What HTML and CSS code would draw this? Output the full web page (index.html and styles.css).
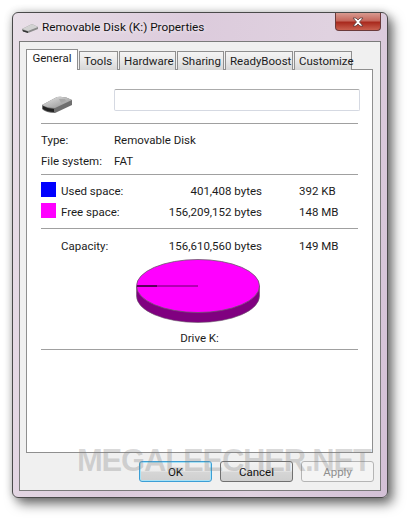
FILE: index.html
```html
<!DOCTYPE html>
<html lang="en">
<head>
    <meta charset="UTF-8">
    <meta name="viewport" content="width=device-width, initial-scale=1.0">
    <title>Removable Disk (K:) Properties</title>
    <link rel="stylesheet" href="styles.css">
</head>
<body>
    <div class="window">
        <div class="title-bar">
            <svg class="title-icon" width="18" height="12" viewBox="0 0 18 12">
                <path d="M1 7 L11 2 L17 5 L17 7 L7 11 L1 9 Z" fill="#8b8b8b"/>
                <path d="M1 7 L11 2 L17 5 L7 9 Z" fill="#d2d2d2"/>
                <path d="M2 8 L7 9.5 L7 11 L2 9.5 Z" fill="#333"/>
            </svg>
            <span class="title-text">Removable Disk (K:) Properties</span>
            <div class="close-button">
                <svg width="14" height="10" viewBox="0 0 14 10">
                    <path d="M2 1 L5 1 L7 3 L9 1 L12 1 L8.5 5 L12 9 L9 9 L7 7 L5 9 L2 9 L5.5 5 Z" fill="#fff" stroke="#5b3a3a" stroke-width="0.8"/>
                </svg>
            </div>
        </div>

        <div class="dialog">
            <div class="tabs">
                <div class="tab tab-active">General</div>
                <div class="tab tab-tools">Tools</div>
                <div class="tab tab-hardware">Hardware</div>
                <div class="tab tab-sharing">Sharing</div>
                <div class="tab tab-boost">ReadyBoost</div>
                <div class="tab tab-customize">Customize</div>
            </div>

            <div class="panel">
                <div class="name-row">
                    <svg class="drive-icon" width="32" height="18" viewBox="0 0 32 18">
                        <defs>
                            <linearGradient id="driveTop" x1="0" y1="0" x2="1" y2="1">
                                <stop offset="0" stop-color="#e6e6e6"/>
                                <stop offset="1" stop-color="#8d8d8d"/>
                            </linearGradient>
                        </defs>
                        <path d="M1 9 L16 1 Q24 0 31 4 L31 9 L14 17 Q5 17 1 13 Z" fill="#6f6f6f"/>
                        <path d="M1 9 L16 1 Q24 0 31 4 L14 12 Q6 12 1 9 Z" fill="url(#driveTop)"/>
                        <path d="M2 10 Q7 13 13 13 L13 16 Q6 16 2 13 Z" fill="#222"/>
                        <path d="M18 3 L24 3 L25 5 L20 7 Z" fill="#a8a8a8"/>
                    </svg>
                    <div class="name-field"></div>
                </div>
                <div class="separator"></div>

                <div class="info-row info-type">
                    <span class="info-label">Type:</span>
                    <span>Removable Disk</span>
                </div>
                <div class="info-row info-fs">
                    <span class="info-label">File system:</span>
                    <span>FAT</span>
                </div>
                <div class="separator"></div>

                <div class="space-row space-used">
                    <span class="swatch swatch-used"></span>
                    <span class="space-label">Used space:</span>
                    <span class="space-bytes">401,408 bytes</span>
                    <span class="space-size">392 KB</span>
                </div>
                <div class="space-row space-free">
                    <span class="swatch swatch-free"></span>
                    <span class="space-label">Free space:</span>
                    <span class="space-bytes">156,209,152 bytes</span>
                    <span class="space-size">148 MB</span>
                </div>
                <div class="separator"></div>

                <div class="space-row space-capacity">
                    <span class="swatch"></span>
                    <span class="space-label">Capacity:</span>
                    <span class="space-bytes">156,610,560 bytes</span>
                    <span class="space-size">149 MB</span>
                </div>

                <svg class="pie" width="126" height="66" viewBox="0 0 126 66">
                    <path d="M1.500 27 L1.500 37 A61.500 26.500 0 0 0 124.500 37 L124.500 27 Z" fill="#800080" stroke="#6a5a6a" stroke-width="0.6"/>
                    <ellipse cx="63" cy="27" rx="61.500" ry="26.500" fill="#ff00ff" stroke="#6a5a6a" stroke-width="0.8"/>
                    <path d="M2 27 L63 27" stroke="#400040" stroke-width="0.8"/>
                    <path d="M2 27 L22 27" stroke="#000" stroke-width="1"/>
                </svg>
                <div class="drive-label">Drive K:</div>
                <div class="separator"></div>
            </div>

            <div class="buttons">
                <div class="button button-default">OK</div>
                <div class="button">Cancel</div>
                <div class="button button-disabled">Apply</div>
            </div>
        </div>

        <div class="watermark">MEGALEECHER.NET</div>
    </div>
</body>
</html>
```

FILE: styles.css
```css
html, body {
    margin: 0;
    height: 100%;
    background-color: #fff;
    font-family: Roboto, sans-serif;
    font-size: 11.5px;
    color: #1c1c1c;
    overflow: hidden;
}

.window {
    position: relative;
    box-sizing: border-box;
    width: 376px;
    height: 486px;
    margin: 12px 0 0 12px;
    padding: 0 6px 6px;
    display: flex;
    flex-direction: column;
    border: 1px solid #4a4a4a;
    border-radius: 6px;
    background: linear-gradient(100deg, #e9dfe8, #dccbdc 40%, #e0d2e0 70%, #d3c0d6);
    box-shadow: 5px 6px 12px rgba(0, 0, 0, 0.55), 0 0 8px rgba(0, 0, 0, 0.2);
}

.title-bar {
    height: 28px;
    display: flex;
    align-items: center;
    flex-shrink: 0;
}

.title-icon {
    margin: 1px 3px 0 2px;
}

.title-text {
    font-size: 11.8px;
    color: #111;
    text-shadow: 0 0 4px #fff;
}

.close-button {
    position: absolute;
    top: 0;
    right: 6px;
    width: 46px;
    height: 18px;
    display: flex;
    align-items: center;
    justify-content: center;
    box-sizing: border-box;
    border: 1px solid #6b3a3a;
    border-top: none;
    border-radius: 0 0 4px 4px;
    background: linear-gradient(#d89a90, #c5675c 45%, #a92a1e 55%, #c9604f);
}

.dialog {
    flex: 1;
    display: flex;
    flex-direction: column;
    padding: 7px 7px 0 6px;
    border: 1px solid #7a7a7a;
    background-color: #f0f0f0;
}

.tabs {
    display: flex;
    height: 20px;
    gap: 1px;
    position: relative;
    z-index: 1;
}

.tab {
    box-sizing: border-box;
    height: 19px;
    margin-top: 2px;
    padding: 2px 0 0 4px;
    border: 1px solid #8f8f8f;
    border-bottom: none;
    background: linear-gradient(#f4f4f4, #eaeaea 45%, #d6d6d6);
}

.tab-active {
    width: 52px;
    height: 21px;
    margin-top: 0;
    padding: 1px 0 0;
    text-align: center;
    background: #fff;
}

.tab-tools { width: 39px; }
.tab-hardware { width: 57px; }
.tab-sharing { width: 47px; }
.tab-boost { width: 68px; }
.tab-customize { width: 58px; }

.panel {
    box-sizing: border-box;
    width: 347px;
    height: 384px;
    padding: 0 14px;
    border: 1px solid #8f8f8f;
    background-color: #fff;
}

.name-row {
    display: flex;
    align-items: flex-start;
    height: 53px;
    padding-top: 19px;
    box-sizing: border-box;
}

.drive-icon {
    flex-shrink: 0;
    margin: 7px 41px 0 0;
}

.name-field {
    flex-shrink: 0;
    box-sizing: border-box;
    width: 246px;
    height: 22px;
    border: 1px solid #d5d9e2;
    border-top-color: #ababab;
    border-radius: 2px;
    background-color: #fff;
}

.separator {
    height: 1px;
    background-color: #a0a0a0;
}

.info-row {
    display: flex;
    height: 21px;
    line-height: 23px;
}

.info-type {
    margin-top: 5px;
}

.info-fs {
    margin-bottom: 3px;
}

.info-label {
    width: 73px;
}

.space-row {
    display: flex;
    align-items: center;
    height: 21px;
}

.space-used {
    margin-top: 4px;
}

.space-free {
    margin-bottom: 7px;
}

.space-capacity {
    margin-top: 5px;
}

.swatch {
    width: 15px;
    height: 15px;
    margin-right: 5px;
}

.swatch-used {
    background-color: #0000ff;
}

.swatch-free {
    background-color: #ff00ff;
}

.space-label,
.space-bytes,
.space-size {
    padding-top: 2px;
}

.space-label {
    width: 90px;
}

.space-bytes {
    width: 111px;
    text-align: right;
}

.space-size {
    margin-left: 37px;
}

.pie {
    display: block;
    margin: 4px 0 0 94px;
}

.drive-label {
    height: 22px;
    line-height: 23px;
    margin-top: 2px;
    text-align: center;
}

.buttons {
    display: flex;
    justify-content: flex-end;
    gap: 8px;
    margin-top: 8px;
    margin-right: -1px;
}

.button {
    box-sizing: border-box;
    width: 73px;
    height: 21px;
    line-height: 21px;
    text-align: center;
    color: #111;
    border: 1px solid #707070;
    border-radius: 3px;
    background: linear-gradient(#f2f2f2, #ebebeb 48%, #d6d6d6 52%, #cfcfcf);
}

.button-default {
    border-color: #3c9fd6;
    box-shadow: inset 0 0 0 1px #a8e2f6;
}

.button-disabled {
    color: #8f8f8f;
    border-color: #b5b5b5;
    background: #f4f4f4;
}

.watermark {
    position: absolute;
    left: 64px;
    top: 430px;
    font-family: "Liberation Sans", sans-serif;
    font-size: 31px;
    font-weight: bold;
    letter-spacing: -1.2px;
    white-space: nowrap;
    color: rgba(120, 120, 120, 0.28);
}
```
